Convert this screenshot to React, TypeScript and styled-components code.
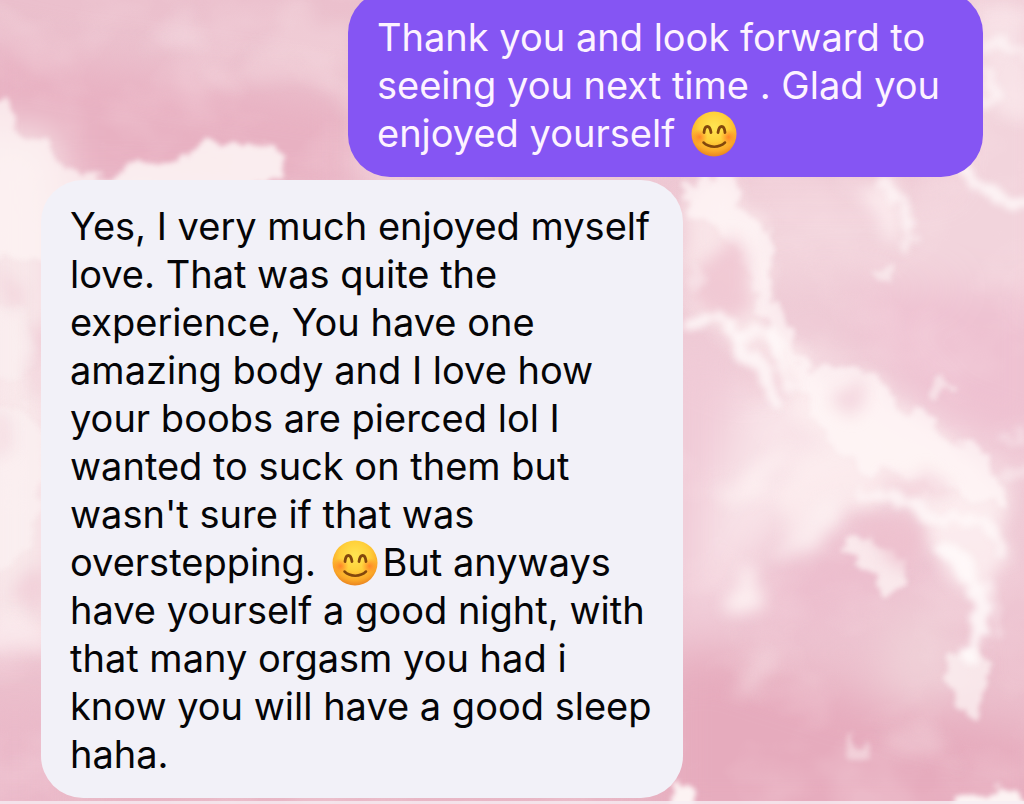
import React from 'react';
import styled, { createGlobalStyle } from 'styled-components';

const GlobalStyle = createGlobalStyle`
  *, *::before, *::after { box-sizing: border-box; }
  body {
    margin: 0;
    background: #edc6d1;
    font-family: Inter, "Liberation Sans", sans-serif;
    overflow-x: hidden;
  }
`;

const Page = styled.main`
  display: grid;
  grid-template-columns: minmax(0, 1fr);
  min-height: 100vh;
  overflow: hidden;
`;

const Wallpaper = styled.svg`
  grid-area: 1 / 1;
  width: 100%;
  height: 0;
  min-height: 100%;
`;

const Thread = styled.ol`
  grid-area: 1 / 1;
  z-index: 1;
  display: flex;
  flex-direction: column;
  gap: 3px;
  margin: -9px 0 0;
  padding: 0 41px 6px;
  list-style: none;
`;

const Bubble = styled.li<{ $sent?: boolean }>`
  align-self: ${(p) => (p.$sent ? 'flex-end' : 'flex-start')};
  width: 100%;
  max-width: ${(p) => (p.$sent ? '635px' : '642px')};
  padding: 22px 28px 20px 29px;
  border-radius: 42px;
  background: ${(p) => (p.$sent ? '#8555f3' : '#f2f1f8')};
  color: ${(p) => (p.$sent ? '#fdf3ff' : '#050507')};
`;

const Message = styled.p`
  margin: 0;
  font-size: 38px;
  line-height: 48px;
`;

const EmojiIcon = styled.svg`
  display: inline-block;
  width: 46px;
  height: 46px;
  margin: 0 5px;
  vertical-align: -10px;
`;

function Smile() {
  return (
    <EmojiIcon viewBox="0 0 46 46" aria-hidden="true">
      <defs>
        <radialGradient id="face" cx="50%" cy="34%" r="66%">
          <stop offset="0" stopColor="#ffe552" />
          <stop offset="0.5" stopColor="#ffd03a" />
          <stop offset="0.82" stopColor="#fba928" />
          <stop offset="1" stopColor="#ea8420" />
        </radialGradient>
        <radialGradient id="cheek">
          <stop offset="0" stopColor="#ff6a22" stopOpacity="0.7" />
          <stop offset="1" stopColor="#ff7a22" stopOpacity="0" />
        </radialGradient>
      </defs>
      <circle cx="23" cy="23" r="22.5" fill="url(#face)" />
      <circle cx="8.5" cy="26" r="8" fill="url(#cheek)" />
      <circle cx="37.5" cy="26" r="8" fill="url(#cheek)" />
      <g fill="none" stroke="#82470c" strokeLinecap="round" strokeLinejoin="round">
        <path d="M13 21.500C13.800 13.500 18.800 13.500 20 21.500" strokeWidth="2.800" />
        <path d="M27 21.500C28.200 13.500 33.200 13.500 34 21.500" strokeWidth="2.800" />
        <path d="M12.500 31.500C18 37 28.500 37 34 31.500" strokeWidth="2.500" />
      </g>
    </EmojiIcon>
  );
}

function Clouds() {
  return (
    <Wallpaper viewBox="0 0 1024 804" preserveAspectRatio="xMidYMid slice" aria-hidden="true">
      <defs>
        <linearGradient id="sky" x1="0" y1="0" x2="0" y2="1">
          <stop offset="0" stopColor="#ebc0cd" />
          <stop offset="0.4" stopColor="#efcbd6" />
          <stop offset="0.7" stopColor="#efc9d5" />
          <stop offset="1" stopColor="#e9b6c5" />
        </linearGradient>
        <filter id="haze" x="-30%" y="-30%" width="160%" height="160%" colorInterpolationFilters="sRGB">
          <feGaussianBlur stdDeviation="22" />
        </filter>
        <filter id="mist" x="-20%" y="-20%" width="140%" height="140%" colorInterpolationFilters="sRGB">
          <feTurbulence type="fractalNoise" baseFrequency="0.025" numOctaves="4" seed="4" result="n" />
          <feDisplacementMap in="SourceGraphic" in2="n" scale="50" xChannelSelector="R" yChannelSelector="G" />
          <feGaussianBlur stdDeviation="8" />
        </filter>
        <filter id="puff" x="-20%" y="-20%" width="140%" height="140%" colorInterpolationFilters="sRGB">
          <feTurbulence type="fractalNoise" baseFrequency="0.05" numOctaves="4" seed="9" result="n" />
          <feDisplacementMap in="SourceGraphic" in2="n" scale="28" xChannelSelector="R" yChannelSelector="G" />
          <feGaussianBlur stdDeviation="2.6" />
        </filter>
        <filter id="rim" x="-20%" y="-20%" width="140%" height="140%" colorInterpolationFilters="sRGB">
          <feTurbulence type="fractalNoise" baseFrequency="0.06" numOctaves="3" seed="21" result="n" />
          <feDisplacementMap in="SourceGraphic" in2="n" scale="24" xChannelSelector="R" yChannelSelector="G" />
          <feGaussianBlur stdDeviation="3.6" />
        </filter>
        <filter id="wisps" x="0" y="0" width="100%" height="100%" colorInterpolationFilters="sRGB">
          <feTurbulence type="fractalNoise" baseFrequency="0.012 0.016" numOctaves="3" seed="12" />
          <feColorMatrix values="0 0 0 0 1  0 0 0 0 0.93  0 0 0 0 0.94  2.4 0 0 0 -1.05" />
        </filter>
      </defs>
      <rect width="1024" height="804" fill="url(#sky)" />

      <g filter="url(#haze)">
        <path d="M-30 40L60 60L360 100L360 200L60 190L-30 120Z" fill="#e8b1c2" />
        <path d="M940 -20H1060V300L860 280L700 290V180H940Z" fill="#f2d4dc" />
        <path d="M850 290L1050 290V460L940 420L880 360Z" fill="#eec1d1" />
        <path d="M670 340L740 370L800 480L740 620L670 640Z" fill="#f0cbd7" />
        <path d="M760 340L860 380L990 460L1000 540L900 490L780 530L700 600L710 500Z" fill="#f8e3e8" />
        <path d="M700 650L860 700L1050 740V830H660V670Z" fill="#e6abbd" />
        <path d="M850 520L920 530L900 590L770 640L760 590Z" fill="#ecbdcd" />
        <path d="M890 610L950 620L960 690L880 710Z" fill="#efd0d7" />
        <path d="M-30 130H60V640L-30 640Z" fill="#f8e8ea" />
        <path d="M-30 720H60V830H-30Z" fill="#eab9c9" />
      </g>

      <rect width="1024" height="804" filter="url(#wisps)" opacity="0.2" />

      <g filter="url(#mist)" fill="#fdf0f1">
        <path d="M150 42L190 15L205 44L170 56Z" opacity="0.3" />
        <path d="M190 85L250 60L290 10L350 20V115L290 80Z" opacity="0.22" />
        <path d="M684 180L725 180L770 250L782 340L815 375L885 385L950 445L1010 490L1010 530L910 490L860 510L800 540L770 500L820 440L790 410L750 350L684 320Z" opacity="0.62" />
        <path d="M842 180L905 180L912 250L878 232Z" opacity="0.75" />
        <path d="M728 484L785 448L788 472L738 500Z" opacity="0.9" />
        <path d="M722 578L750 564L772 600L736 616Z" opacity="0.95" />
        <path d="M775 555L800 525L860 490L820 545Z" opacity="0.8" />
        <path d="M915 496L990 515L1010 560L985 600L940 562Z" opacity="0.85" />
        <path d="M985 5L1030 15V130L985 95Z" opacity="0.5" />
        <path d="M880 720L930 730L960 765L890 750Z" opacity="0.25" />
        <path d="M-12 610L60 615L45 655L-12 665Z" opacity="0.6" />
        <path d="M755 660L770 650L762 695L720 695Z" opacity="0.35" />
      </g>

      <g filter="url(#puff)" fill="#fcf3f3">
        <path d="M-12 96L6 104L14 130L45 142L54 164L80 174L116 184L110 260L-12 260Z" opacity="0.8" />
        <path d="M110 174L138 160L156 168L194 152L212 142L242 146L262 142L290 154L280 178L258 182V200H110Z" opacity="0.9" />
        <path d="M-12 300L25 310L38 355L20 380L-12 375Z" opacity="0.5" />
        <path d="M-12 405L20 405L44 430L46 480L24 550L-12 570Z" opacity="0.6" />
        <path d="M928 384L940 370L954 390L940 398Z" opacity="0.6" />
        <path d="M872 268L896 268L890 282L876 282Z" opacity="0.6" />
        <path d="M846 545L866 534L908 565L904 590L885 592Z" opacity="0.8" />
        <path d="M945 658L972 650L990 664L986 700L974 722L954 700Z" opacity="0.75" />
        <path d="M850 738L860 744L866 762L850 760Z" opacity="0.45" />
        <path d="M936 816L955 792L978 796L1000 787L1022 798L1034 820Z" />
        <path d="M672 776L698 810L672 816Z" />
      </g>

      <g filter="url(#puff)" fill="#fff8f7">
        <path d="M680 184L712 176L730 178L740 202L768 240L772 292L788 322L794 350L812 374L842 364L872 374L892 392L900 414L924 410L946 436L982 446L998 480L1010 506L970 500L920 478L870 470L834 450L816 420L804 392L776 368L762 316L748 276L724 232L692 214Z" opacity="0.68" />
      </g>

      <g filter="url(#mist)" fill="#edc0cd">
        <path d="M692 262L735 246L748 300L735 320L692 312Z" opacity="0.75" />
        <path d="M735 350L762 345L785 390L760 400Z" opacity="0.4" />
        <path d="M832 388L864 386L854 412L826 408Z" opacity="0.55" />
        <path d="M850 520L905 514L928 545L910 564L875 545Z" opacity="0.75" />
        <path d="M890 474L950 484L940 500L880 492Z" opacity="0.5" />
        <path d="M5 270L30 280L22 300L0 290Z" opacity="0.5" />
        <path d="M-4 420L16 424L12 450L-4 452Z" opacity="0.4" />
        <path d="M15 570L40 560L44 610L10 600Z" opacity="0.5" />
        <path d="M26 330L46 325L46 400L30 390Z" opacity="0.6" />
      </g>

      <g filter="url(#rim)" fill="none" stroke="#fffafa" strokeLinecap="round" strokeLinejoin="round">
        <path d="M688 324L720 316L735 336L742 356L762 366L774 398" strokeWidth="12" opacity="0.8" />
        <path d="M742 334L766 332L780 352L790 390" strokeWidth="11" opacity="0.7" />
        <path d="M880 180L904 204L910 228L906 250" strokeWidth="9" opacity="0.7" />
        <path d="M965 168L980 188L998 198L1026 206" strokeWidth="11" opacity="0.8" />
        <path d="M985 50L1000 42L1028 58M986 72L998 94L984 104" strokeWidth="10" opacity="0.6" />
        <path d="M862 494L915 502L930 520L955 518L985 524L1002 548" strokeWidth="12" opacity="0.75" />
        <path d="M940 548L968 568L980 600L978 630L970 656" strokeWidth="14" opacity="0.85" />
        <path d="M1000 476L1030 472M1004 440L1022 436M988 586L1000 634" strokeWidth="9" opacity="0.4" />
        <path d="M694 266L697 290" strokeWidth="10" opacity="0.4" />
      </g>
      <rect y="801" width="1024" height="3" fill="#f6eef3" opacity="0.8" />
    </Wallpaper>
  );
}

export default function App() {
  return (
    <>
      <GlobalStyle />
      <Page>
        <Clouds />
        <Thread aria-label="Conversation">
          <Bubble $sent>
            <Message>
              Thank you and look forward to seeing you next time . Glad you enjoyed yourself <Smile />
            </Message>
          </Bubble>
          <Bubble>
            <Message>
              Yes, I very much enjoyed myself love. That was quite the experience, You have one
              amazing body and I love how your boobs are pierced lol I wanted to suck on them but
              wasn't sure if that was overstepping. <Smile />But anyways have yourself a good
              night, with that many orgasm you had i know you will have a good sleep haha.
            </Message>
          </Bubble>
        </Thread>
      </Page>
    </>
  );
}
